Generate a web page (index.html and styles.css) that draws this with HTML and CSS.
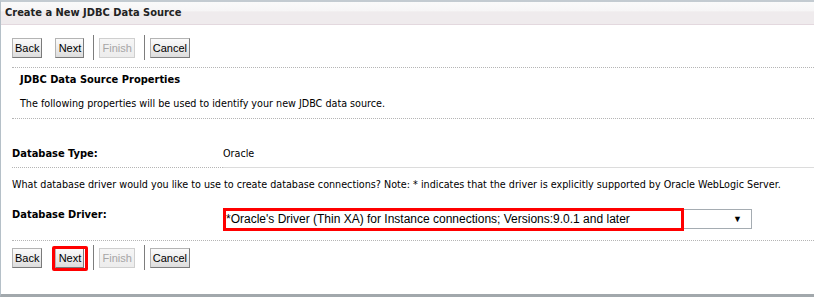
FILE: index.html
```html
<!DOCTYPE html>
<html>
<head>
<meta charset="utf-8">
<link rel="stylesheet" href="styles.css">
</head>
<body>
<div class="panel">
  <div class="title">Create a New JDBC Data Source</div>
  <div class="content">
    <div class="toolbar top">
      <button class="btn">Back</button>
      <button class="btn">Next</button>
      <span class="sep"></span>
      <button class="btn disabled">Finish</button>
      <span class="sep"></span>
      <button class="btn">Cancel</button>
    </div>
    <div class="section">
      <div class="sec-title">JDBC Data Source Properties</div>
      <div class="sec-desc">The following properties will be used to identify your new JDBC data source.</div>
    </div>
    <div class="row type-row">
      <div class="label">Database Type:</div>
      <div class="value">Oracle</div>
    </div>
    <div class="note">What database driver would you like to use to create database connections? Note: * indicates that the driver is explicitly supported by Oracle WebLogic Server.</div>
    <div class="row driver-row">
      <div class="label">Database Driver:</div>
      <div class="select-wrap">
        <div class="select">
          <span class="sel-text">*Oracle's Driver (Thin XA) for Instance connections; Versions:9.0.1 and later</span>
          <span class="arrow">&#9660;</span>
        </div>
        <span class="hl hl-select"></span>
      </div>
    </div>
    <div class="toolbar bottom">
      <button class="btn">Back</button>
      <span class="hl-wrap"><button class="btn">Next</button><span class="hl hl-next"></span></span>
      <span class="sep"></span>
      <button class="btn disabled">Finish</button>
      <span class="sep"></span>
      <button class="btn">Cancel</button>
    </div>
  </div>
</div>
</body>
</html>
```

FILE: styles.css
```css
html, body {
  margin: 0;
  padding: 0;
  background: #ffffff;
}
body {
  font-family: "DejaVu Sans Condensed", "DejaVu Sans", Tahoma, sans-serif;
  font-size: 10.7px;
  color: #000;
}
.panel {
  width: 813px;
  height: 292px;
  border-top: 2px solid #c3cbd1;
  border-left: 1px solid #b5c0c8;
  border-bottom: 3px solid #a2a8ac;
  box-shadow: 0 1px 0 #d8dbdd;
  overflow: hidden;
}
.title {
  height: 22px;
  line-height: 21px;
  padding-left: 4px;
  font-weight: bold;
  font-size: 11px;
  color: #222;
  background: linear-gradient(#fafafa 0%, #f6f5f6 40%, #efebed 45%, #efebed 100%);
  border-bottom: 1px solid #e3d8de;
}
.content {
  padding-left: 11px;
}
.toolbar {
  display: flex;
  align-items: center;
}
.toolbar.top {
  height: 39px;
  padding-top: 3px;
  border-bottom: 1px dotted #b5b5b5;
}
.toolbar.bottom {
  height: 33px;
  border-top: 1px dotted #b5b5b5;
}
.btn {
  font-family: "Liberation Sans", Arial, sans-serif;
  font-size: 11px;
  height: 20px;
  padding: 0 2px;
  margin: 0 13px 0 0;
  border: 1px solid #8f8f8f;
  border-color: #b4b4b4 #7a7a7a #7a7a7a #b4b4b4;
  background: linear-gradient(#fbfbfb, #ececec 55%, #dcdcdc);
  color: #000;
  line-height: 16px;
  border-radius: 0;
  min-width: 29px;
}
.btn.disabled {
  color: #a6a6a6;
  border-color: #cfcfcf;
  background: linear-gradient(#f6f6f6, #ececec);
}
.sep {
  width: 1px;
  height: 25px;
  background: #7d7d7d;
  margin: 0 5px 0 -4px;
}
.hl-wrap {
  position: relative;
  display: inline-flex;
  margin-right: 13px;
}
.hl-wrap .btn { margin-right: 0; }
.hl {
  position: absolute;
  border: 3px solid #f00;
  pointer-events: none;
}
.hl-next {
  left: -3px;
  top: -2px;
  right: -4px;
  bottom: -3px;
  border-radius: 2px;
}
.section {
  padding-left: 8px;
  border-bottom: 1px dotted #b5b5b5;
}
.sec-title {
  font-weight: bold;
  font-size: 11px;
  height: 24px;
  line-height: 24px;
}
.sec-desc {
  height: 26px;
  line-height: 24px;
}
.row {
  display: flex;
}
.label {
  width: 211px;
  font-weight: bold;
  font-size: 11px;
  flex: none;
}
.type-row {
  margin-top: 22px;
  height: 27px;
  align-items: stretch;
}
.type-row .label {
  border-bottom: 1px dotted #b5b5b5;
  line-height: 25px;
}
.type-row .value {
  flex: 1;
  border-bottom: 1px solid #dcdcdc;
  line-height: 25px;
}
.note {
  height: 34px;
  line-height: 34px;
  white-space: nowrap;
}
.driver-row {
  height: 38px;
  align-items: flex-start;
}
.driver-row .label {
  padding-top: 6px;
  line-height: 14px;
}
.select-wrap {
  position: relative;
  margin-top: 7px;
}
.select {
  width: 516px;
  height: 18px;
  border: 1px solid #a5acb2;
  display: flex;
  align-items: center;
  justify-content: space-between;
  padding: 0 9px 0 2px;
  font-family: "Liberation Sans", Arial, sans-serif;
  font-size: 12px;
}
.arrow {
  font-size: 9px;
}
.hl-select {
  left: 0;
  top: -1px;
  width: 455px;
  height: 17px;
}
```
